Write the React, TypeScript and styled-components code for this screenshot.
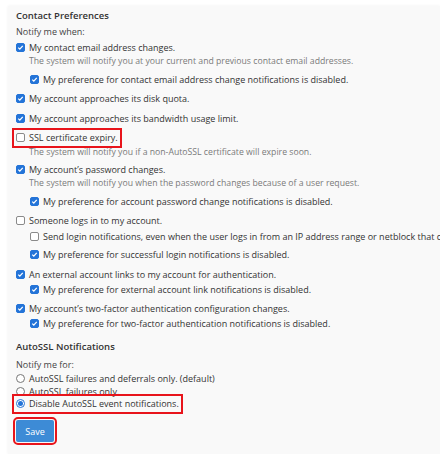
import React from 'react';
import styled, { createGlobalStyle, css } from 'styled-components';

const GlobalStyle = createGlobalStyle`
  html, body {
    margin: 0;
    padding: 0;
    background: #ffffff;
  }
  body {
    font-family: "Open Sans", "Liberation Sans", sans-serif;
    color: #333333;
  }
`;

const Page = styled.div`
  padding: 6px 0 0 8px;
  min-height: 100vh;
  box-sizing: border-box;
`;

const Panel = styled.section`
  background: #f9f9f9;
  box-shadow: 0 0 3px rgba(0, 0, 0, 0.06);
  min-height: calc(100vh - 6px);
  box-sizing: border-box;
  padding: 3px 0 0 8px;
  overflow: hidden;
  white-space: nowrap;
`;

const Heading = styled.h2<{ $top?: number }>`
  margin: ${p => p.$top ?? 0}px 0 0;
  font-size: 9.5px;
  font-weight: 600;
  line-height: 13px;
  color: #333333;
`;

const Intro = styled.div<{ $top: number }>`
  margin-top: ${p => p.$top}px;
  font-size: 9px;
  line-height: 13px;
  color: #444444;
`;

const Group = styled.div`
  margin-top: 3.5px;
`;

const Row = styled.div<{ $sub?: boolean; $top?: number }>`
  display: flex;
  align-items: center;
  padding: 2px 0;
  padding-left: ${p => (p.$sub ? 14 : 0)}px;
  margin-top: ${p => p.$top ?? 0}px;
`;

const Choice = styled.label<{ $marked?: boolean; $height?: number }>`
  display: inline-flex;
  align-items: center;
  gap: 4px;
  height: ${p => p.$height ?? 12}px;
  font-size: 9px;
  color: #333333;
  ${p =>
    p.$marked &&
    css`
      outline: 2px solid #e8141b;
      outline-offset: 2px;
    `}
`;

const Box = styled.span<{ $on: boolean }>`
  width: 9px;
  height: 9px;
  box-sizing: border-box;
  border-radius: 2px;
  flex-shrink: 0;
  display: flex;
  align-items: center;
  justify-content: center;
  background: ${p => (p.$on ? '#2474d8' : '#ffffff')};
  border: 1px solid ${p => (p.$on ? '#2474d8' : '#8a8a8a')};
`;

const Help = styled.div`
  padding-left: 13px;
  font-size: 8.7px;
  line-height: 12px;
  color: #7a7a7a;
`;

const RadioRow = styled.div<{ $first?: boolean }>`
  display: flex;
  align-items: center;
  margin-top: ${p => (p.$first ? 2 : 0)}px;
`;

const Dot = styled.span<{ $on: boolean }>`
  width: 9px;
  height: 9px;
  box-sizing: border-box;
  border-radius: 50%;
  flex-shrink: 0;
  background: #ffffff;
  border: 1px solid ${p => (p.$on ? '#2474d8' : '#777777')};
  display: flex;
  align-items: center;
  justify-content: center;
  &::after {
    content: '';
    width: 5px;
    height: 5px;
    border-radius: 50%;
    background: ${p => (p.$on ? '#2474d8' : 'transparent')};
  }
`;

const SaveButton = styled.button`
  margin-top: 10px;
  width: 38px;
  height: 22px;
  padding: 0;
  border: none;
  border-radius: 2px;
  background: #3d8bd6;
  color: #ffffff;
  font-family: "Open Sans", "Liberation Sans", sans-serif;
  font-size: 9px;
  outline: 2px solid #e8141b;
  outline-offset: 1px;
  cursor: pointer;
`;

const Check = ({ on }: { on: boolean }) => (
  <Box $on={on}>
    {on && (
      <svg width="7" height="7" viewBox="0 0 10 10">
        <path d="M1.8 5.2 L4 7.4 L8.2 2.6" fill="none" stroke="#ffffff" strokeWidth="1.8" />
      </svg>
    )}
  </Box>
);

type Item = {
  label: string;
  on: boolean;
  help?: string;
  marked?: boolean;
  subs?: Array<{ label: string; on: boolean; top: number }>;
};

const ITEMS: Item[] = [
  {
    label: 'My contact email address changes.',
    on: true,
    help: 'The system will notify you at your current and previous contact email addresses.',
    subs: [{ label: 'My preference for contact email address change notifications is disabled.', on: true, top: 4 }],
  },
  { label: 'My account approaches its disk quota.', on: true },
  { label: 'My account approaches its bandwidth usage limit.', on: true },
  {
    label: 'SSL certificate expiry.',
    on: false,
    marked: true,
    help: 'The system will notify you if a non-AutoSSL certificate will expire soon.',
  },
  {
    label: 'My account’s password changes.',
    on: true,
    help: 'The system will notify you when the password changes because of a user request.',
    subs: [{ label: 'My preference for account password change notifications is disabled.', on: true, top: 4 }],
  },
  {
    label: 'Someone logs in to my account.',
    on: false,
    subs: [
      {
        label: 'Send login notifications, even when the user logs in from an IP address range or netblock that contains an IP address from which a user successfully logged in previously.',
        on: false,
        top: 0,
      },
      { label: 'My preference for successful login notifications is disabled.', on: true, top: 2 },
    ],
  },
  {
    label: 'An external account links to my account for authentication.',
    on: true,
    subs: [{ label: 'My preference for external account link notifications is disabled.', on: true, top: -1 }],
  },
  {
    label: 'My account’s two-factor authentication configuration changes.',
    on: true,
    subs: [{ label: 'My preference for two-factor authentication notifications is disabled.', on: true, top: -1 }],
  },
];

const RADIOS = [
  { label: 'AutoSSL failures and deferrals only. (default)', on: false },
  { label: 'AutoSSL failures only.', on: false },
  { label: 'Disable AutoSSL event notifications.', on: true, marked: true },
];

export default function App() {
  return (
    <>
      <GlobalStyle />
      <Page>
        <Panel>
          <Heading>Contact Preferences</Heading>
          <Intro $top={3}>Notify me when:</Intro>
          <div style={{ marginTop: -2.5 }}>
            {ITEMS.map(item => (
              <Group key={item.label}>
                <Row>
                  <Choice $marked={item.marked}>
                    <Check on={item.on} />
                    {item.label}
                  </Choice>
                </Row>
                {item.help && <Help>{item.help}</Help>}
                {item.subs?.map(sub => (
                  <Row key={sub.label} $sub $top={sub.top}>
                    <Choice>
                      <Check on={sub.on} />
                      {sub.label}
                    </Choice>
                  </Row>
                ))}
              </Group>
            ))}
          </div>
          <Heading $top={8}>AutoSSL Notifications</Heading>
          <Intro $top={5}>Notify me for:</Intro>
          {RADIOS.map((r, i) => (
            <RadioRow key={r.label} $first={i === 0}>
              <Choice $marked={r.marked} $height={12.5}>
                <Dot $on={r.on} />
                {r.label}
              </Choice>
            </RadioRow>
          ))}
          <SaveButton type="button">Save</SaveButton>
        </Panel>
      </Page>
    </>
  );
}
